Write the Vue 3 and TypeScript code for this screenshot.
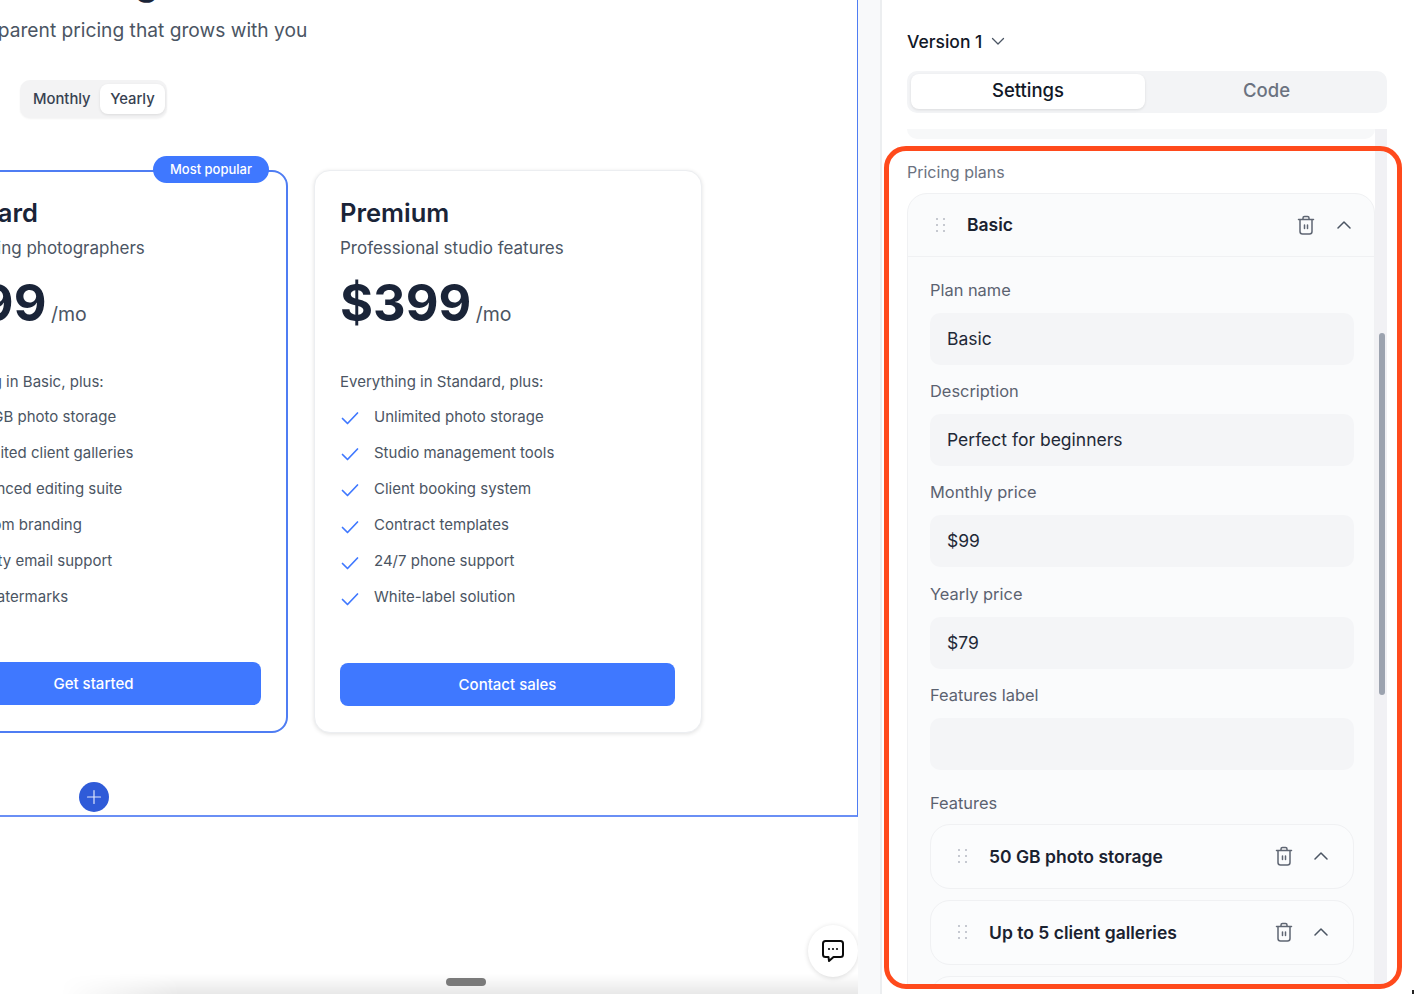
<script setup lang="ts">
interface Plan {
  name: string
  description: string
  price: string
  label: string
  features: string[]
  cta: string
  popular?: boolean
}

const plans: Plan[] = [
  {
    name: 'Standard',
    description: 'For growing photographers',
    price: '$199',
    label: 'Everything in Basic, plus:',
    features: [
      '500 GB photo storage',
      'Unlimited client galleries',
      'Advanced editing suite',
      'Custom branding',
      'Priority email support',
      'No watermarks',
    ],
    cta: 'Get started',
    popular: true,
  },
  {
    name: 'Premium',
    description: 'Professional studio features',
    price: '$399',
    label: 'Everything in Standard, plus:',
    features: [
      'Unlimited photo storage',
      'Studio management tools',
      'Client booking system',
      'Contract templates',
      '24/7 phone support',
      'White-label solution',
    ],
    cta: 'Contact sales',
  },
]

const fields = [
  { label: 'Plan name', value: 'Basic' },
  { label: 'Description', value: 'Perfect for beginners' },
  { label: 'Monthly price', value: '$99' },
  { label: 'Yearly price', value: '$79' },
  { label: 'Features label', value: '' },
]

const featureItems = ['50 GB photo storage', 'Up to 5 client galleries', 'Basic editing tools']
const dots = [0, 1, 2, 3, 4, 5]
const trashPath =
  'M1.5 4.5h15M6 4.5V3a1.5 1.5 0 0 1 1.5-1.5h3A1.5 1.5 0 0 1 12 3v1.5M3 4.5v12A2.5 2.5 0 0 0 5.5 19h7a2.5 2.5 0 0 0 2.5-2.5v-12M7.5 10v3.5M10.5 10v3.5'
</script>

<template>
  <div class="app">
    <main class="canvas">
      <section class="frame">
        <h1 class="headline">Pricing</h1>
        <p class="subline">Transparent pricing that grows with you</p>
        <div class="toggle">
          <span class="toggle-item">Monthly</span>
          <span class="toggle-item active">Yearly</span>
        </div>
        <div class="cards">
          <article v-for="plan in plans" :key="plan.name" class="card" :class="{ popular: plan.popular }">
            <span v-if="plan.popular" class="badge">Most popular</span>
            <h2 class="plan-name">{{ plan.name }}</h2>
            <p class="plan-desc">{{ plan.description }}</p>
            <div class="plan-price">
              <span class="amount">{{ plan.price }}</span>
              <span class="per">/mo</span>
            </div>
            <p class="plan-label">{{ plan.label }}</p>
            <ul class="plan-features">
              <li v-for="feature in plan.features" :key="feature">
                <svg class="check" viewBox="0 0 18 18" fill="none">
                  <path d="M1.5 9.5 6.5 14.5 16.5 4" stroke="#3f78ff" stroke-width="1.7" stroke-linecap="round" stroke-linejoin="round" />
                </svg>
                <span>{{ feature }}</span>
              </li>
            </ul>
            <button class="plan-cta" type="button">{{ plan.cta }}</button>
          </article>
        </div>
        <button class="add-section" type="button" aria-label="Add section">
          <svg viewBox="0 0 16 16" width="16" height="16" fill="none">
            <path d="M8 1.5v13M1.5 8h13" stroke="#dfe6fb" stroke-width="1.2" stroke-linecap="round" />
          </svg>
        </button>
      </section>
      <div class="bottom-fade"></div>
      <div class="bottom-handle"></div>
      <button class="chat" type="button" aria-label="Chat">
        <svg viewBox="0 0 24 24" width="24" height="24" fill="none">
          <path d="M4.5 2h15A2.5 2.5 0 0 1 22 4.5v11a2.5 2.5 0 0 1-2.5 2.5h-7L8 22l-.5-4h-3A2.5 2.5 0 0 1 2 15.5v-11A2.5 2.5 0 0 1 4.5 2Z" stroke="#0b0b0b" stroke-width="2" stroke-linejoin="round" />
          <circle cx="8" cy="10" r="1.1" fill="#0b0b0b" />
          <circle cx="12" cy="10" r="1.1" fill="#0b0b0b" />
          <circle cx="16" cy="10" r="1.1" fill="#0b0b0b" />
        </svg>
      </button>
    </main>
    <div class="gutter"></div>
    <aside class="panel">
      <div class="version">
        <span>Version 1</span>
        <svg viewBox="0 0 14 14" width="14" height="14" fill="none">
          <path d="M1.5 4.5 7 10l5.5-5.5" stroke="#4b5563" stroke-width="1.3" stroke-linecap="round" stroke-linejoin="round" />
        </svg>
      </div>
      <div class="tabs">
        <div class="tab active">Settings</div>
        <div class="tab code">Code</div>
      </div>
      <div class="scroller">
        <div class="scroll-content">
          <div class="prev-item"></div>
          <div class="group-label">Pricing plans</div>
          <div class="plan-card">
            <div class="row-head">
              <div class="drag">
                <i v-for="d in dots" :key="d"></i>
              </div>
              <span class="row-title">Basic</span>
              <svg class="trash" viewBox="0 0 18 20" fill="none">
                <path :d="trashPath" stroke="#5f6673" stroke-width="1.5" stroke-linecap="round" stroke-linejoin="round" />
              </svg>
              <svg class="chevron" viewBox="0 0 14 10" fill="none">
                <path d="M1 8 7 2l6 6" stroke="#4b5563" stroke-width="1.5" stroke-linecap="round" stroke-linejoin="round" />
              </svg>
            </div>
            <div class="plan-body">
              <div v-for="field in fields" :key="field.label" class="field">
                <label>{{ field.label }}</label>
                <div class="input">{{ field.value }}</div>
              </div>
              <div class="features-label">Features</div>
              <div class="feature-list">
                <div v-for="item in featureItems" :key="item" class="feature-row">
                  <div class="drag">
                    <i v-for="d in dots" :key="d"></i>
                  </div>
                  <span class="row-title">{{ item }}</span>
                  <svg class="trash" viewBox="0 0 18 20" fill="none">
                    <path :d="trashPath" stroke="#5f6673" stroke-width="1.5" stroke-linecap="round" stroke-linejoin="round" />
                  </svg>
                  <svg class="chevron" viewBox="0 0 14 10" fill="none">
                    <path d="M1 8 7 2l6 6" stroke="#4b5563" stroke-width="1.5" stroke-linecap="round" stroke-linejoin="round" />
                  </svg>
                </div>
              </div>
            </div>
          </div>
        </div>
        <div class="scrollbar">
          <div class="thumb"></div>
        </div>
      </div>
      <div class="highlight"></div>
      <div class="corner-mark"></div>
    </aside>
  </div>
</template>

<style scoped>
.app {
  width: 1414px;
  height: 994px;
  display: flex;
  overflow: hidden;
  background: #fff;
  font-family: Inter, "Liberation Sans", sans-serif;
  color: #111827;
}

/* left preview */
.canvas {
  width: 858px;
  flex: none;
  position: relative;
  overflow: hidden;
  background: #fff;
}

.gutter {
  width: 22px;
  flex: none;
  background: #f8f9fa;
}

.frame {
  position: relative;
  width: 958px;
  height: 817px;
  margin-left: -100px;
  box-sizing: border-box;
  display: flex;
  flex-direction: column;
  border-right: 1px solid #4f7df3;
  border-bottom: 2px solid #6a8ff5;
}

.headline {
  margin: -40px 0 12px 134px;
  font-size: 36px;
  line-height: 44px;
  font-weight: 700;
  color: #1a2438;
}

.subline {
  margin: 0 0 0 47px;
  font-size: 19.2px;
  line-height: 28px;
  color: #4b5563;
}

.toggle {
  align-self: flex-start;
  display: flex;
  align-items: center;
  margin: 36px 0 0 120px;
  height: 38px;
  padding: 4px 2px 4px 13px;
  box-sizing: border-box;
  border-radius: 10px;
  background: #f3f3f4;
  box-shadow: 0 1px 2px rgba(0, 0, 0, 0.05);
  font-size: 14.8px;
  font-weight: 500;
  color: #374151;
}

.toggle-item {
  margin-right: 9.5px;
  height: 30px;
  line-height: 30px;
}

.toggle-item.active {
  margin-right: 0;
  padding: 0 10px;
  border-radius: 8px;
  background: #fff;
  box-shadow: 0 1px 3px rgba(0, 0, 0, 0.1);
}

.cards {
  display: flex;
  gap: 26px;
  margin-top: 52px;
}

.card {
  position: relative;
  width: 388px;
  height: 563px;
  box-sizing: border-box;
  display: flex;
  flex-direction: column;
  padding: 26px 26px 26px 25px;
  border: 1px solid #eceef1;
  border-radius: 16px;
  background: #fff;
  box-shadow: 0 1px 4px rgba(0, 0, 0, 0.12);
}

.card.popular {
  padding: 25px 25px 26px 24px;
  border: 2px solid #4f7df3;
  box-shadow: none;
}

.badge {
  position: absolute;
  top: -16px;
  right: 17px;
  width: 116px;
  height: 27px;
  border-radius: 14px;
  background: #3f78ff;
  color: #fff;
  font-size: 13px;
  font-weight: 500;
  line-height: 27px;
  text-align: center;
}

.plan-name {
  margin: 0;
  font-size: 25.5px;
  line-height: 32px;
  font-weight: 600;
  color: #1a2438;
}

.plan-desc {
  margin: 7px 0 0;
  font-size: 17px;
  line-height: 24px;
  color: #4b5563;
}

.plan-price {
  display: flex;
  align-items: baseline;
  gap: 4.5px;
  margin-top: 13px;
}

.amount {
  font-size: 50.5px;
  line-height: 60px;
  font-weight: 700;
  color: #1a2438;
}

.per {
  font-size: 19.5px;
  color: #4b5563;
}

.plan-label {
  margin: 39px 0 0;
  font-size: 15px;
  line-height: 20px;
  color: #4b5563;
}

.plan-features {
  list-style: none;
  margin: 14.5px 0 0;
  padding: 0;
  display: flex;
  flex-direction: column;
  gap: 16.2px;
}

.plan-features li {
  display: flex;
  align-items: flex-start;
  gap: 15px;
  height: 20px;
  font-size: 15px;
  line-height: 20px;
  color: #4b5563;
}

.check {
  width: 18px;
  height: 18px;
  flex: none;
  margin: 2.5px 0 0 1px;
}

.plan-cta {
  margin-top: auto;
  height: 43px;
  border: 0;
  border-radius: 8px;
  background: #3f78ff;
  color: #fff;
  font-family: inherit;
  font-size: 15px;
  font-weight: 500;
}

.add-section {
  position: absolute;
  left: 179px;
  top: 782px;
  width: 30px;
  height: 30px;
  padding: 0;
  border: 0;
  border-radius: 50%;
  background: #2f5bd8;
  display: flex;
  align-items: center;
  justify-content: center;
}

.bottom-fade {
  position: absolute;
  left: 0;
  right: 0;
  bottom: 0;
  height: 20px;
  background: linear-gradient(to bottom, rgba(0, 0, 0, 0), rgba(0, 0, 0, 0.09));
  -webkit-mask-image: linear-gradient(to right, transparent 60px, #000 180px);
  mask-image: linear-gradient(to right, transparent 60px, #000 180px);
}

.bottom-handle {
  position: absolute;
  left: 446px;
  top: 978px;
  width: 40px;
  height: 8px;
  border-radius: 4px;
  background: #7a7a7a;
}

.chat {
  position: absolute;
  left: 808px;
  top: 925px;
  width: 50px;
  height: 52px;
  padding: 0;
  border: 0;
  border-radius: 50%;
  background: #fff;
  box-shadow: 0 1px 5px rgba(0, 0, 0, 0.14);
  display: flex;
  align-items: center;
  justify-content: center;
}

/* right settings panel */
.panel {
  position: relative;
  flex: 1;
  min-width: 0;
  box-sizing: border-box;
  display: flex;
  flex-direction: column;
  padding: 29px 27px 0 25px;
  border-left: 2px solid #eceef0;
  background: #fff;
}

.version {
  display: flex;
  align-items: center;
  gap: 9px;
  height: 24px;
  font-size: 17.5px;
  font-weight: 500;
  color: #111827;
}

.tabs {
  display: flex;
  margin-top: 18px;
  height: 42px;
  flex: none;
  box-sizing: border-box;
  padding: 3px 4px 4px;
  border-radius: 10px;
  background: #f3f4f6;
}

.tab {
  flex: 1;
  text-align: center;
  font-size: 18.5px;
  font-weight: 500;
  line-height: 33px;
  color: #6b7280;
}

.tab.code {
  padding-left: 5px;
}

.tab.active {
  flex: none;
  width: 234px;
  border-radius: 8px;
  background: #fff;
  color: #111827;
  box-shadow: 0 1px 3px rgba(0, 0, 0, 0.1);
}

.scroller {
  flex: 1;
  min-height: 0;
  display: flex;
  margin-top: 16px;
  margin-bottom: 8px;
  overflow: hidden;
}

.scroll-content {
  flex: 1;
  min-width: 0;
}

.prev-item {
  height: 10px;
  border-radius: 0 0 14px 14px;
  background: #f7f8f9;
}

.group-label {
  margin-top: 23px;
  height: 21px;
  line-height: 21px;
  font-size: 16px;
  color: #6b7280;
}

.plan-card {
  margin-top: 10px;
  border: 1px solid #f0f1f3;
  border-radius: 20px 20px 0 0;
  background: #fafbfc;
}

.row-head {
  display: flex;
  align-items: center;
  height: 63px;
  box-sizing: border-box;
  padding: 0 23px 1px 28px;
  border-bottom: 1px solid #f0f1f3;
}

.drag {
  width: 9px;
  display: grid;
  grid-template-columns: 2px 2px;
  column-gap: 5px;
  row-gap: 4px;
  flex: none;
  margin-right: 22px;
}

.drag i {
  width: 2px;
  height: 2px;
  border-radius: 50%;
  background: #b4b9c2;
}

.row-title {
  flex: 1;
  font-size: 17.5px;
  font-weight: 600;
  color: #1a2230;
}

.trash {
  width: 18px;
  height: 20px;
  flex: none;
  margin-right: 22px;
}

.chevron {
  width: 14px;
  height: 10px;
  flex: none;
}

.plan-body {
  padding: 22px 20px 0 22px;
}

.field {
  margin-bottom: 15.2px;
}

.field label {
  display: block;
  height: 22px;
  line-height: 22px;
  font-size: 16.4px;
  font-weight: 400;
  color: #5b6270;
}

.input {
  height: 52px;
  margin-top: 12px;
  padding: 0 17px;
  border-radius: 10px;
  background: #f4f5f7;
  line-height: 52px;
  font-size: 17.5px;
  color: #1f2937;
}

.features-label {
  margin-top: 22px;
  height: 22px;
  line-height: 22px;
  font-size: 16.4px;
  color: #5b6270;
}

.feature-list {
  display: flex;
  flex-direction: column;
  gap: 11px;
  margin-top: 10px;
}

.feature-row {
  display: flex;
  align-items: center;
  height: 65px;
  box-sizing: border-box;
  padding: 0 25px 0 27px;
  border: 1px solid #f0f1f3;
  border-radius: 20px;
  background: #fbfcfd;
}

.feature-row .trash {
  margin-right: 21px;
}

.scrollbar {
  width: 12px;
  flex: none;
  background: #f1f1f4;
}

.thumb {
  width: 6px;
  height: 362px;
  margin: 204px 0 0 4px;
  border-radius: 3px;
  background: #9ca3af;
}

.highlight {
  position: absolute;
  left: 2px;
  top: 146px;
  width: 518px;
  height: 843px;
  box-sizing: border-box;
  border: 5px solid #ff4a1c;
  border-radius: 22px;
  pointer-events: none;
}

.corner-mark {
  position: absolute;
  right: 0;
  bottom: 0;
  width: 2px;
  height: 4px;
  background: #222;
}
</style>

<style>
html, body {
  margin: 0;
  overflow: hidden;
}
</style>
